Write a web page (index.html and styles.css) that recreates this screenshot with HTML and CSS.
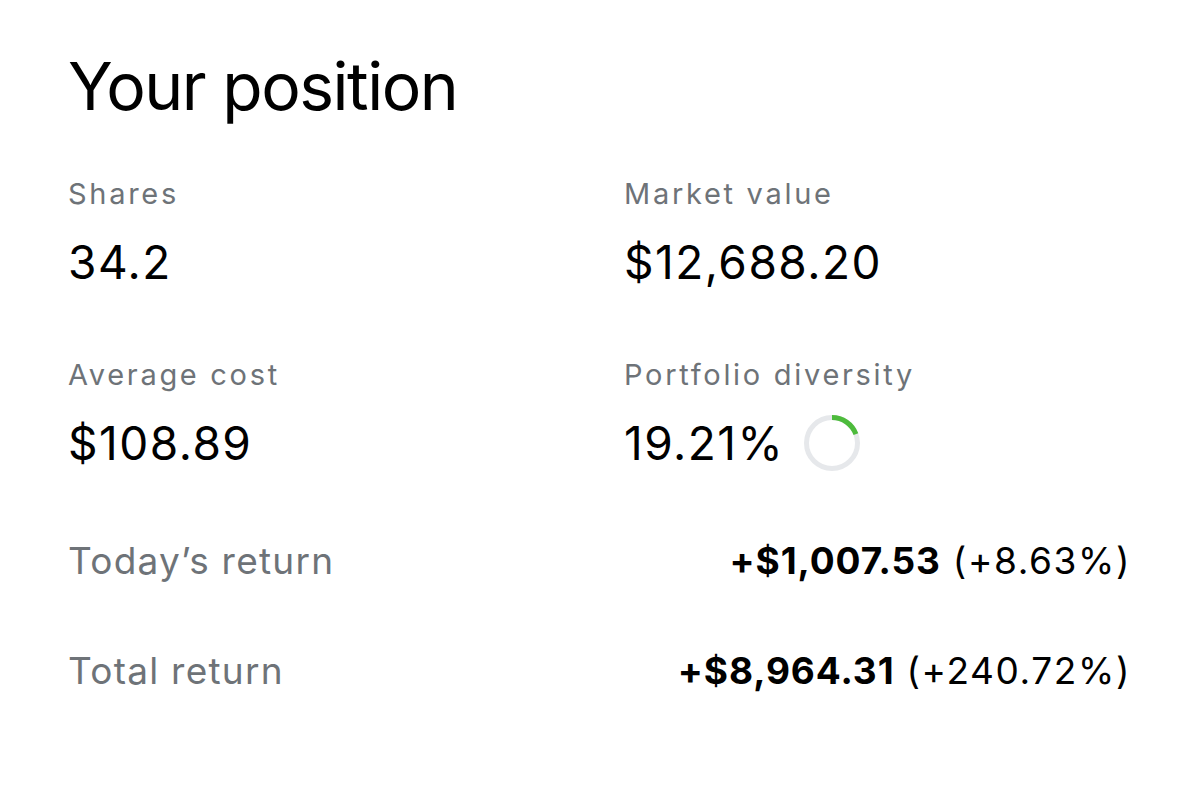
FILE: index.html
```html
<!DOCTYPE html>
<html lang="en">
<head>
  <title>Your position</title>
  <link rel="stylesheet" href="styles.css">
</head>
<body>

<div class="position">
  <h1 class="title">Your position</h1>

  <div class="stats">
    <div class="stat">
      <div class="label">Shares</div>
      <div class="value">34.2</div>
    </div>
    <div class="stat">
      <div class="label">Market value</div>
      <div class="value">$12,688.20</div>
    </div>
    <div class="stat">
      <div class="label">Average cost</div>
      <div class="value">$108.89</div>
    </div>
    <div class="stat">
      <div class="label">Portfolio diversity</div>
      <div class="value">
        19.21%
        <svg class="ring" width="56" height="56" viewBox="0 0 56 56">
          <circle cx="28" cy="28" r="25.5" fill="none" stroke="#e6e8eb" stroke-width="5"/>
          <circle cx="28" cy="28" r="25.5" fill="none" stroke="#4dbb3c" stroke-width="5"
            stroke-dasharray="30.8 200" transform="rotate(-90 28 28)"/>
        </svg>
      </div>
    </div>
  </div>

  <div class="returns">
    <div class="return-row">
      <span class="return-label">Today’s return</span>
      <span class="return-value"><b>+$1,007.53</b> (+8.63%)</span>
    </div>
    <div class="return-row">
      <span class="return-label">Total return</span>
      <span class="return-value"><b>+$8,964.31</b> (+240.72%)</span>
    </div>
  </div>
</div>

</body>
</html>
```

FILE: styles.css
```css
body {
  font-family: Inter, "Noto Sans", sans-serif;
  margin: 0;
  background-color: #fff;
  color: #000;
}
.position {
  padding: 46px 69px 0 68px;
}
.title {
  margin: 0;
  font-size: 66px;
  line-height: 80px;
  font-weight: 400;
  letter-spacing: -1.5px;
}
.stats {
  display: grid;
  grid-template-columns: 556px 1fr;
  row-gap: 68px;
  margin-top: 51px;
}
.label {
  font-size: 29px;
  line-height: 34px;
  letter-spacing: 2.7px;
  color: #6e7378;
}
.value {
  display: flex;
  align-items: center;
  margin-top: 23px;
  font-size: 46px;
  line-height: 56px;
  letter-spacing: 1.5px;
}
.ring {
  margin-left: 20px;
}
.returns {
  display: flex;
  flex-direction: column;
  gap: 64px;
  margin-top: 67px;
}
.return-row {
  display: flex;
  justify-content: space-between;
  font-size: 37px;
  line-height: 46px;
}
.return-label {
  color: #6e7378;
  letter-spacing: 1.25px;
}
.return-value {
  letter-spacing: 1.6px;
}
.return-value b {
  font-weight: 700;
  letter-spacing: 0.9px;
}
```
